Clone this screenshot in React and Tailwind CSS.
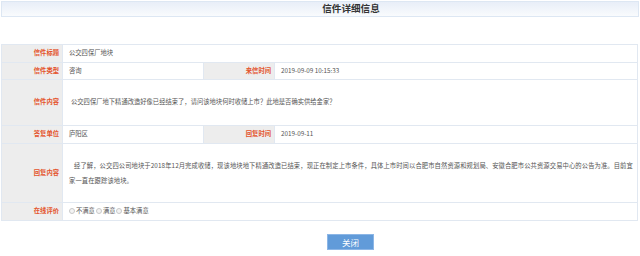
import React from "react";

const font = { fontFamily: '"Noto Sans CJK SC", "Noto Sans", sans-serif' };

function Label({ children, className = "" }) {
  return (
    <td className={"bg-[#ededed] text-right pr-[3px] text-[#e4532b] font-bold border border-[#e1e8f1] " + className}>
      {children}
    </td>
  );
}

function Val({ children, className = "", colSpan }) {
  return (
    <td colSpan={colSpan} className={"bg-white text-left pl-[6px] text-[#555] border border-[#e1e8f1] " + className}>
      {children}
    </td>
  );
}

function Radio({ label }) {
  return (
    <span className="inline-flex items-center">
      <span className="inline-block w-[6px] h-[6px] rounded-full border border-[#c8c8c8] bg-[#f4f4f4] mr-[1px]" />
      <span>{label}</span>
    </span>
  );
}

export default function App() {
  return (
    <div className="w-[640px] h-[256px] bg-white overflow-hidden text-[6.3px] leading-none" style={font}>
      <div className="mx-[1px] mt-[1px] h-[16px] border border-[#dde7f3] bg-gradient-to-b from-[#e8eef8] to-[#f9fbfd] flex items-center justify-center pl-[62px]">
        <span className="text-[9.6px] font-bold text-[#333]">信件详细信息</span>
      </div>
      <div className="h-[27px]" />
      <table className="ml-[1px] w-[637px] border-collapse table-fixed border border-[#dbe4ef]">
        <colgroup>
          <col className="w-[61px]" />
          <col className="w-[141px]" />
          <col className="w-[71px]" />
          <col />
        </colgroup>
        <tbody>
          <tr className="h-[18px]">
            <Label>信件标题</Label>
            <Val colSpan={3}>公交四保厂地块</Val>
          </tr>
          <tr className="h-[17px]">
            <Label>信件类型</Label>
            <Val>咨询</Val>
            <Label>来信时间</Label>
            <Val>2019-09-09 10:15:33</Val>
          </tr>
          <tr className="h-[46px]">
            <Label>信件内容</Label>
            <Val colSpan={3}>
              <span className="pl-[2px]">公交四保厂地下精通改造好像已经结束了，请问该地块何时收储上市？此地是否确实供给金家？</span>
            </Val>
          </tr>
          <tr className="h-[18px]">
            <Label>答复单位</Label>
            <Val>庐阳区</Val>
            <Label>回复时间</Label>
            <Val>2019-09-11</Val>
          </tr>
          <tr className="h-[59px]">
            <Label>回复内容</Label>
            <Val colSpan={3} className="pr-[2px]">
              <p className="leading-[15.5px] indent-[5px] tracking-[0.1px]">
                经了解，公交四公司地块于2018年12月完成收储，现该地块地下精通改造已结束，现正在制定上市条件，具体上市时间以合肥市自然资源和规划局、安徽合肥市公共资源交易中心的公告为准。目前宜家一直在跟踪该地块。
              </p>
            </Val>
          </tr>
          <tr className="h-[18px]">
            <Label>在线评价</Label>
            <Val colSpan={3} className="pl-[3px]">
              <span className="inline-flex items-center gap-[1px]">
                <Radio label="不满意" />
                <Radio label="满意" />
                <Radio label="基本满意" />
              </span>
            </Val>
          </tr>
        </tbody>
      </table>
      <div className="flex justify-center mt-[13px] pl-[61px]">
        <button className="w-[47px] h-[16px] bg-[#619bd9] text-white text-[8.5px] flex items-center justify-center border border-[#8cb6e6]">
          关闭
        </button>
      </div>
    </div>
  );
}
